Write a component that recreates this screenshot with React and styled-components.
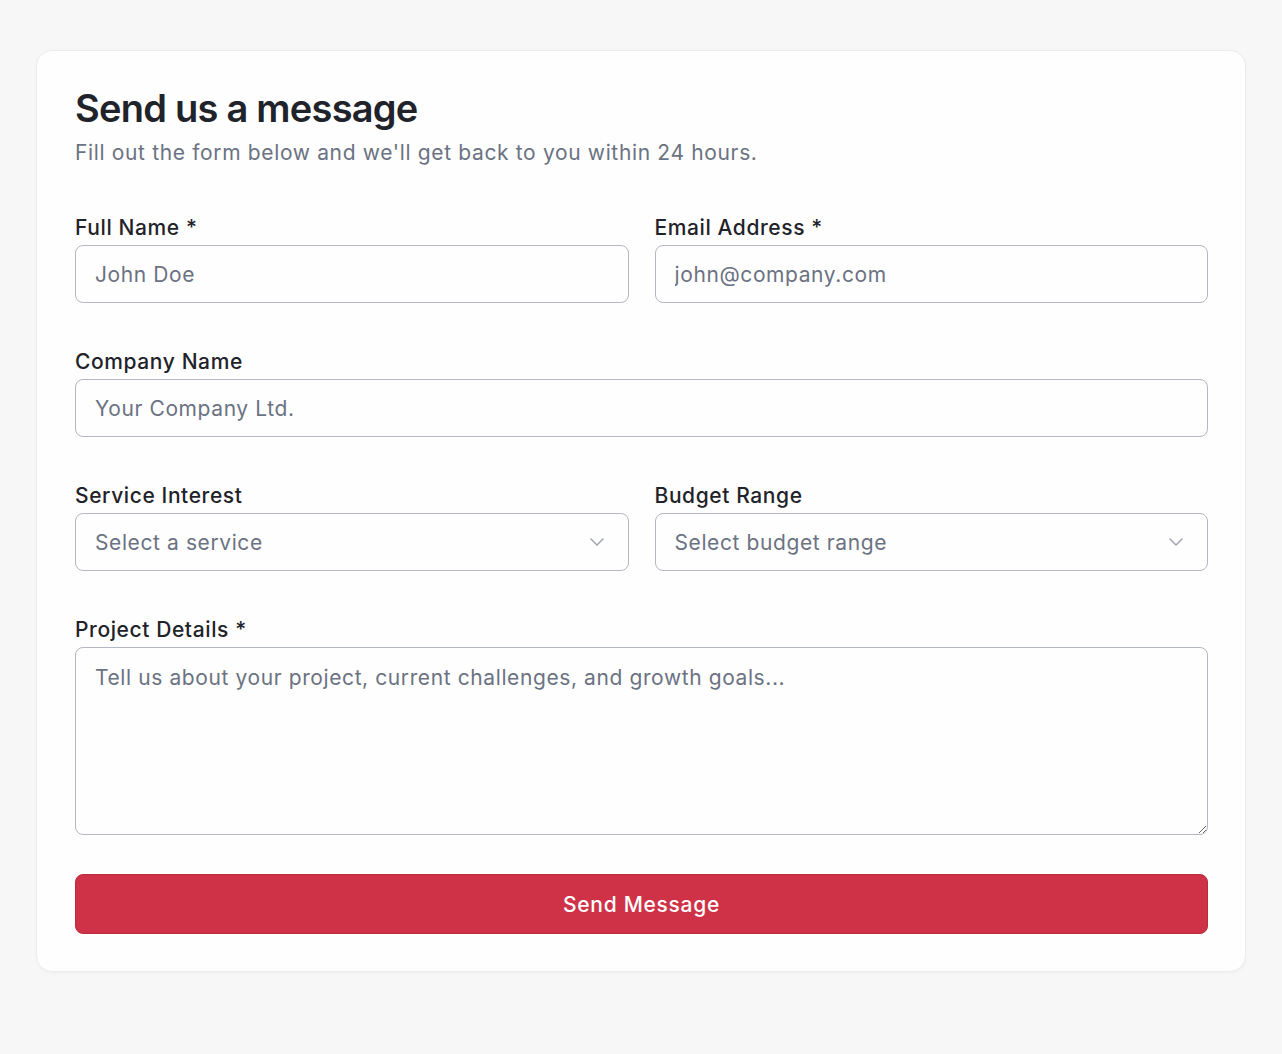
import React from "react";
import styled, { createGlobalStyle } from "styled-components";
import { ChevronDown } from "lucide-react";

const GlobalStyle = createGlobalStyle`
  * {
    box-sizing: border-box;
  }
  body {
    margin: 0;
    background: #f7f7f8;
    font-family: Inter, "Noto Sans", sans-serif;
    color: #1f2329;
  }
`;

const Page = styled.div`
  padding: 50px 36px 82px 36px;
`;

const Card = styled.div`
  background: #fefefe;
  border: 1px solid #ececef;
  border-radius: 16px;
  box-shadow: 0 1px 3px rgba(0, 0, 0, 0.04);
  padding: 37px 37px 37px 38px;
`;

const Title = styled.h1`
  margin: 0;
  font-size: 38px;
  line-height: 40px;
  font-weight: 600;
  letter-spacing: -0.75px;
  color: #20232a;
`;

const Subtitle = styled.p`
  margin: 11px 0 0 0;
  font-size: 21px;
  line-height: 28px;
  letter-spacing: 0.65px;
  color: #6b7282;
`;

const Form = styled.form`
  margin-top: 47px;
  display: flex;
  flex-direction: column;
  gap: 45px;
`;

const Row = styled.div`
  display: grid;
  grid-template-columns: ${(p) => (p.$cols === 2 ? "1fr 1fr" : "1fr")};
  column-gap: 26px;
`;

const Field = styled.div`
  display: flex;
  flex-direction: column;
`;

const Label = styled.label`
  font-size: 21px;
  line-height: 28px;
  font-weight: 500;
  letter-spacing: 0.6px;
  color: #1f2329;
  margin-bottom: 3px;
`;

const inputBase = `
  width: 100%;
  font-family: Inter, "Noto Sans", sans-serif;
  font-size: 21px;
  letter-spacing: 0.6px;
  color: #1f2329;
  background: #fefefe;
  border: 1px solid #b3b6c3;
  border-radius: 8px;
  padding: 0 19px;
  outline: none;
  &::placeholder {
    color: #6b7282;
  }
`;

const Input = styled.input`
  ${inputBase}
  height: 58px;
`;

const SelectWrap = styled.div`
  position: relative;
`;

const Select = styled.select`
  ${inputBase}
  height: 58px;
  appearance: none;
  color: #6b7282;
`;

const Chevron = styled(ChevronDown)`
  position: absolute;
  right: 20px;
  top: 50%;
  transform: translateY(-50%);
  color: #9a9eab;
  pointer-events: none;
`;

const TextArea = styled.textarea`
  ${inputBase}
  height: 188px;
  padding: 16px 19px;
  line-height: 28px;
  resize: vertical;
`;

const Button = styled.button`
  height: 60px;
  width: 100%;
  margin-top: -6px;
  border: 1px solid #b92b3f;
  border-radius: 8px;
  background: #cf3147;
  color: #ffffff;
  font-family: Inter, "Noto Sans", sans-serif;
  font-size: 21px;
  font-weight: 500;
  letter-spacing: 0.7px;
  cursor: pointer;
`;

function SelectField({ label, placeholder }) {
  return (
    <Field>
      <Label>{label}</Label>
      <SelectWrap>
        <Select defaultValue="">
          <option value="" disabled>
            {placeholder}
          </option>
        </Select>
        <Chevron size={24} strokeWidth={1.4} />
      </SelectWrap>
    </Field>
  );
}

export default function App() {
  return (
    <Page>
      <GlobalStyle />
      <Card>
        <Title>Send us a message</Title>
        <Subtitle>
          Fill out the form below and we'll get back to you within 24 hours.
        </Subtitle>
        <Form onSubmit={(e) => e.preventDefault()}>
          <Row $cols={2}>
            <Field>
              <Label>Full Name *</Label>
              <Input type="text" placeholder="John Doe" />
            </Field>
            <Field>
              <Label>Email Address *</Label>
              <Input type="email" placeholder="john@company.com" />
            </Field>
          </Row>
          <Row>
            <Field>
              <Label>Company Name</Label>
              <Input type="text" placeholder="Your Company Ltd." />
            </Field>
          </Row>
          <Row $cols={2}>
            <SelectField label="Service Interest" placeholder="Select a service" />
            <SelectField label="Budget Range" placeholder="Select budget range" />
          </Row>
          <Row>
            <Field>
              <Label>Project Details *</Label>
              <TextArea placeholder="Tell us about your project, current challenges, and growth goals..." />
            </Field>
          </Row>
          <Button type="submit">Send Message</Button>
        </Form>
      </Card>
    </Page>
  );
}
